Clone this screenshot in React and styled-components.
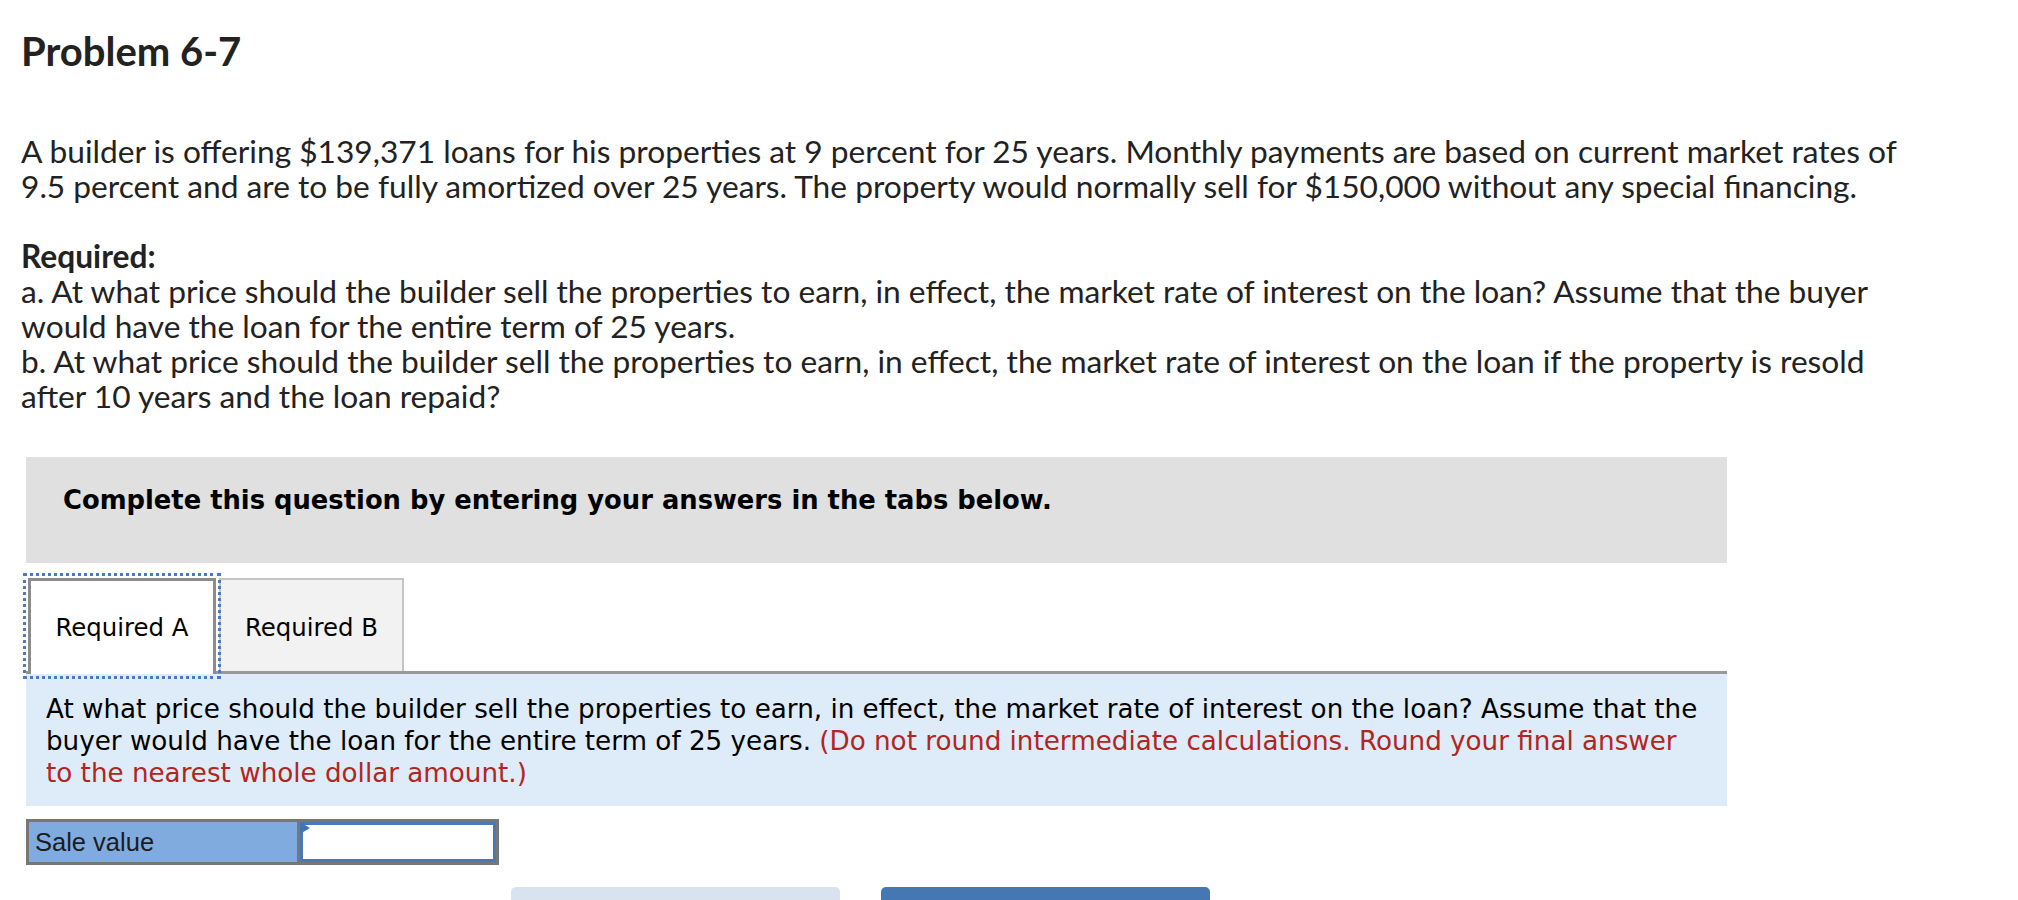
import React from "react";
import styled, { createGlobalStyle } from "styled-components";

const GlobalStyle = createGlobalStyle`
  html, body {
    margin: 0;
    padding: 0;
    background: #fff;
  }
`;

const Page = styled.main`
  padding: 29px 0 0 21px;
  font-family: "Lato", "Open Sans", sans-serif;
  color: #222;
`;

const Title = styled.h1`
  margin: 0;
  font-size: 40px;
  line-height: 44px;
  font-weight: 700;
`;

const Prose = styled.div`
  margin-top: 61px;
  max-width: 1902px;
  font-size: 31.7px;
  line-height: 35px;

  p {
    margin: 0 0 35px;
  }

  strong {
    font-weight: 700;
  }
`;

const Card = styled.section`
  margin: 43px 0 0 5px;
  width: 1701px;
  font-family: "DejaVu Sans", Verdana, sans-serif;
`;

const Instructions = styled.div`
  height: 106px;
  box-sizing: border-box;
  padding: 27px 0 0 37px;
  background: #e0e0e0;
  color: #000;
  font-size: 25.8px;
  font-weight: 700;
  line-height: 32px;
`;

const TabList = styled.div`
  display: flex;
  align-items: flex-end;
  margin-top: 15px;
  padding-left: 2px;
`;

const Tab = styled.button`
  position: relative;
  box-sizing: border-box;
  width: ${({ $width }) => $width}px;
  height: ${({ $active }) => ($active ? 96 : 93)}px;
  margin: ${({ $active }) => ($active ? "0 0 -3px" : "0 0 0 3px")};
  padding: ${({ $active }) => ($active ? "0" : "4px 0 0")};
  font: inherit;
  font-size: 24.4px;
  color: #000;
  cursor: pointer;
  background: ${({ $active }) => ($active ? "#fff" : "#f2f2f2")};
  border: ${({ $active }) => ($active ? "3px solid #8c8c8c" : "2px solid #c4c4c4")};
  border-bottom: none;
  outline: ${({ $active }) => ($active ? "3px dotted #4a7bc0" : "none")};
  outline-offset: 2px;
  z-index: ${({ $active }) => ($active ? 1 : 0)};
`;

const Panel = styled.div`
  box-sizing: border-box;
  padding: 19px 18px 17px 20px;
  background: #deebf8;
  border-top: 3px solid #999;
  color: #000;
  font-size: 26.2px;
  line-height: 32px;
`;

const Hint = styled.span`
  color: #b1261f;
`;

const AnswerRow = styled.div`
  display: flex;
  margin: 13px 0 0 5px;
  width: 473px;
  height: 46px;
  box-sizing: border-box;
  border: 3px solid #777;
  font-family: "Liberation Sans", Arial, sans-serif;
`;

const AnswerLabel = styled.div`
  display: flex;
  align-items: center;
  width: 271px;
  padding-left: 6px;
  box-sizing: border-box;
  background: #80abdf;
  border-right: 3px solid #777;
  color: #1c1c1c;
  font-size: 25.5px;
`;

const AnswerCell = styled.div`
  position: relative;
  flex: 1;
`;

const AnswerInput = styled.input`
  width: 100%;
  height: 100%;
  box-sizing: border-box;
  margin: 0;
  border: 3px solid #4a78b6;
  outline: none;
  background: #fff;
  font: inherit;
  font-size: 24px;
`;

const Marker = styled.span`
  position: absolute;
  top: 0;
  left: 0;
  width: 0;
  height: 0;
  border-top: 6px solid transparent;
  border-bottom: 6px solid transparent;
  border-left: 10px solid #4274b5;
`;

const NavRow = styled.div`
  display: flex;
  gap: 41px;
  margin: 22px 0 40px 490px;
`;

const NavButton = styled.button`
  width: 329px;
  height: 56px;
  border: none;
  border-radius: 5px;
  background: ${({ $primary }) => ($primary ? "#4577b3" : "#d9e3ef")};
`;

export default function App() {
  return (
    <>
      <GlobalStyle />
      <Page>
        <Title>Problem 6-7</Title>
        <Prose>
          <p>
            A builder is offering $139,371 loans for his properties at 9
            percent for 25 years. Monthly payments are based on current market
            rates of 9.5 percent and are to be fully amortized over 25 years.
            The property would normally sell for $150,000 without any special
            financing.
          </p>
          <p>
            <strong>Required:</strong>
            <br />
            a. At what price should the builder sell the properties to earn, in
            effect, the market rate of interest on the loan? Assume that the
            buyer would have the loan for the entire term of 25 years.
            <br />
            b. At what price should the builder sell the properties to earn, in
            effect, the market rate of interest on the loan if the property is
            resold after 10 years and the loan repaid?
          </p>
        </Prose>
        <Card>
          <Instructions>
            Complete this question by entering your answers in the tabs below.
          </Instructions>
          <TabList>
            <Tab $active $width={188}>
              Required A
            </Tab>
            <Tab $width={185}>Required B</Tab>
          </TabList>
          <Panel>
            At what price should the builder sell the properties to earn, in
            effect, the market rate of interest on the loan? Assume that the
            buyer would have the loan for the entire term of 25 years.{" "}
            <Hint>
              (Do not round intermediate calculations. Round your final answer
              to the nearest whole dollar amount.)
            </Hint>
          </Panel>
        </Card>
        <AnswerRow>
          <AnswerLabel>Sale value</AnswerLabel>
          <AnswerCell>
            <AnswerInput type="text" aria-label="Sale value" />
            <Marker />
          </AnswerCell>
        </AnswerRow>
        <NavRow>
          <NavButton disabled aria-label="Previous: Required A" />
          <NavButton $primary aria-label="Next: Required B" />
        </NavRow>
      </Page>
    </>
  );
}
